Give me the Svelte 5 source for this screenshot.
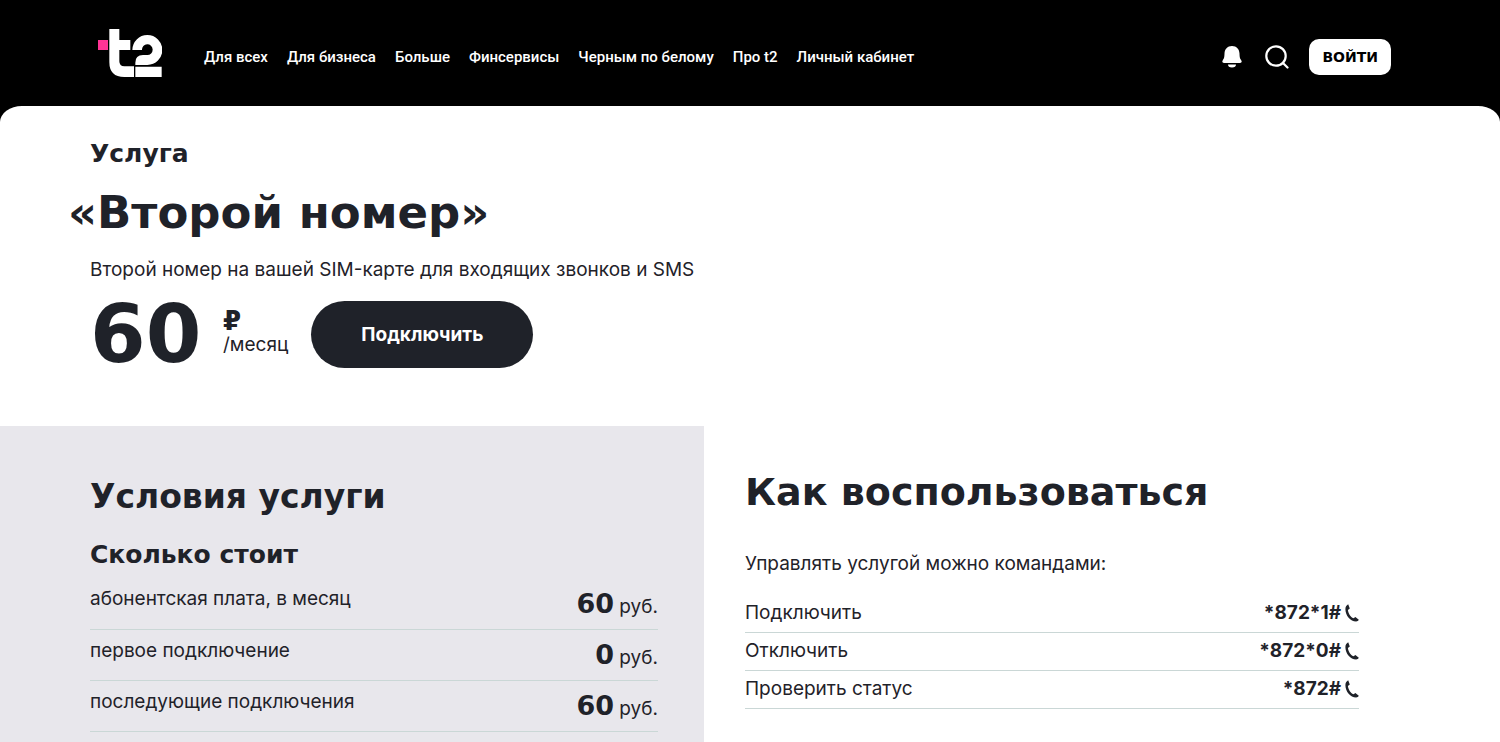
<script>
  const nav = ['Для всех', 'Для бизнеса', 'Больше', 'Финсервисы', 'Черным по белому', 'Про t2', 'Личный кабинет'];
  const prices = [
    ['абонентская плата, в месяц', '60'],
    ['первое подключение', '0'],
    ['последующие подключения', '60']
  ];
  const commands = [
    ['Подключить', '*872*1#'],
    ['Отключить', '*872*0#'],
    ['Проверить статус', '*872#']
  ];
</script>

<div class="page">
  <header>
    <a class="logo" href="#home" aria-label="t2">
      <svg viewBox="54 30 192 144" width="64" height="48">
        <path fill="#ff3495" d="M54 63h30v30H54z" />
        <path fill="#fff" d="M88 30h30v33h33v30h-33v34q0 15 15 15h29v32h-29q-45 0-45-45z" />
        <path fill="#fff" d="M157 93a45 45 0 1 1 45 45h-36v-7q0-23 23-23h13a16 16 0 1 0-16-15zM166 143h79v31h-79z" />
      </svg>
    </a>
    <nav>
      {#each nav as item}<a href="#menu">{item}</a>{/each}
    </nav>
    <div class="actions">
      <button class="icon" aria-label="Уведомления">
        <svg viewBox="0 0 20 22" width="20" height="22" fill="#fff">
          <path d="M10 0C5.400 0 2.600 3.200 2.500 7.500 2.400 11.500 2 12.500.8 14.200-.2 15.700.4 17 2 17h16c1.600 0 2.200-1.300 1.200-2.800-1.200-1.700-1.600-2.700-1.700-6.700C17.400 3.200 14.600 0 10 0zM6 18.500h8a4 3 0 0 1-8 0z" />
        </svg>
      </button>
      <button class="icon" aria-label="Поиск">
        <svg viewBox="0 0 24 24" width="24" height="24" fill="none" stroke="#fff" stroke-width="2.200" stroke-linecap="round">
          <circle cx="11" cy="11" r="9.700" /><path d="M18 18l4.500 4.500" />
        </svg>
      </button>
      <button class="login">ВОЙТИ</button>
    </div>
  </header>
  <main>
    <section class="hero">
      <p class="kind">Услуга</p>
      <h1>«Второй номер»</h1>
      <p class="lead">Второй номер на вашей SIM-карте для входящих звонков и SMS</p>
      <div class="offer">
        <strong>60</strong>
        <div class="unit"><b>₽</b><span>/месяц</span></div>
        <button class="connect">Подключить</button>
      </div>
    </section>
    <div class="columns">
      <section class="terms">
        <h2>Условия услуги</h2>
        <h3>Сколько стоит</h3>
        <table>
          <tbody>
            {#each prices as [label, value]}
              <tr><th scope="row">{label}</th><td><b>{value}</b> руб.</td></tr>
            {/each}
          </tbody>
        </table>
      </section>
      <section class="usage">
        <h2>Как воспользоваться</h2>
        <p>Управлять услугой можно командами:</p>
        <table>
          <tbody>
            {#each commands as [label, code]}
              <tr>
                <th scope="row">{label}</th>
                <td>
                  <a href="tel:{code}">{code}<svg viewBox="0 0 14 18" width="14" height="18"><path fill="#1f2229" d="M3.200.300C1.300 1.300.400 3 .400 5.200c0 6.300 5.100 12.300 10.700 12.300 1.200 0 2.200-.500 2.700-1.700L10.400 13 8.500 14.300C5.500 13 3.300 9.500 2.900 6L4.800 4.500z" /></svg></a>
                </td>
              </tr>
            {/each}
          </tbody>
        </table>
      </section>
    </div>
  </main>
</div>

<style>
  :global(body) { margin: 0; background: #000; }
  .page { color: #1f2229; font: 19px/24px Inter, sans-serif; }
  a { color: inherit; text-decoration: none; }
  button { border: 0; padding: 0; font: inherit; cursor: pointer; }
  h1, h2, h3, p { margin: 0; }
  h1, h2, h3, .kind, .login, .offer strong, .unit b, .terms b {
    font-family: "DejaVu Sans", sans-serif;
    font-weight: 700;
  }
  header { display: flex; align-items: center; height: 106px; padding: 0 109px 0 98px; color: #fff; }
  .logo { display: flex; margin-right: 42px; }
  nav { display: flex; gap: 19px; margin-top: 8px; font: 500 15px/20px Roboto, sans-serif; white-space: nowrap; }
  .actions { display: flex; align-items: center; gap: 20px; margin: 8px 0 0 auto; }
  .icon { display: flex; background: none; margin-right: 3px; }
  .icon + .icon { margin-right: 0; }
  .login { height: 36px; padding: 0 13px; border-radius: 10px; background: #fff; color: #000; font-size: 14px; }
  main { overflow: hidden; border-radius: 22px 22px 0 0 / 16px 16px 0 0; background: #fff; }
  .hero { padding: 32px 90px 58px; }
  .kind { font-size: 25px; line-height: 32px; }
  h1 { margin: 15px 0 0 -22px; font-size: 45px; line-height: 56px; }
  .lead { margin-top: 17px; }
  .offer { display: flex; align-items: center; margin-top: 19px; }
  .offer strong { width: 121px; font-size: 80px; line-height: 66px; }
  .unit { display: flex; flex-direction: column; margin: 0 23px 4px 12px; }
  .unit b { font-size: 26px; }
  .connect { height: 67px; padding: 0 50px; border-radius: 34px; background: #1f2229; color: #fff; font-weight: 700; font-size: 19px; }
  .columns { display: grid; grid-template-columns: 176fr 199fr; }
  .terms { padding: 51px 46px 40px 90px; background: #e8e7ec; }
  .usage { padding: 46px 141px 32px 41px; }
  h2 { font-size: 33px; line-height: 40px; }
  .usage h2 { font-size: 38px; white-space: nowrap; }
  h3 { margin-top: 20px; font-size: 25px; line-height: 36px; }
  table { width: 100%; border-collapse: collapse; }
  th { padding: 0; font-weight: 400; text-align: left; }
  td { padding: 0; text-align: right; white-space: nowrap; }
  tr { border-bottom: 1px solid #cad7d6; }
  .terms table { margin-top: 5px; }
  .terms tr { height: 51px; }
  .terms th { padding-bottom: 8px; }
  .terms td { padding-top: 4px; }
  .terms b { font-size: 27px; }
  .usage p { margin: 40px 0 18px; }
  .usage tr { height: 38px; }
  .usage td a { display: flex; justify-content: flex-end; align-items: center; gap: 4px; font-weight: 700; font-feature-settings: "calt" 0; }
</style>
